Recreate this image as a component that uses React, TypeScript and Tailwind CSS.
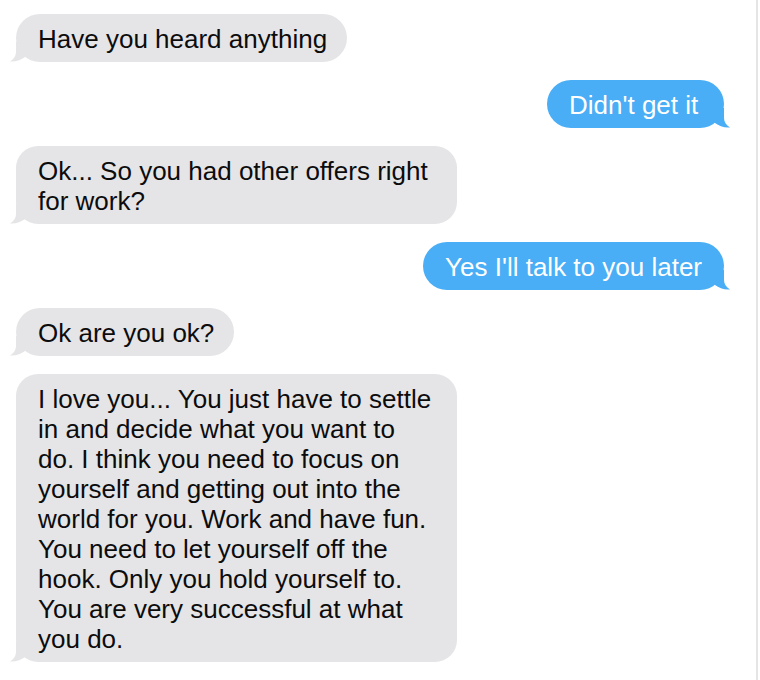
type Message = { id: number; from: "them" | "me"; lines: string[] };

const messages: Message[] = [
  { id: 1, from: "them", lines: ["Have you heard anything"] },
  { id: 2, from: "me", lines: ["Didn't get it"] },
  { id: 3, from: "them", lines: ["Ok... So you had other offers right", "for work?"] },
  { id: 4, from: "me", lines: ["Yes I'll talk to you later"] },
  { id: 5, from: "them", lines: ["Ok are you ok?"] },
  {
    id: 6,
    from: "them",
    lines: [
      "I love you... You just have to settle",
      "in and decide what you want to",
      "do. I think you need to focus on",
      "yourself and getting out into the",
      "world for you. Work and have fun.",
      "You need to let yourself off the",
      "hook. Only you hold yourself to.",
      "You are very successful at what",
      "you do.",
    ],
  },
];

function Tail({ mine }: { mine: boolean }) {
  return (
    <svg
      aria-hidden="true"
      viewBox="0 0 18 20"
      className={
        mine
          ? "absolute -right-1.5 bottom-0 h-5 w-[18px] -scale-x-100 fill-[#49aef5]"
          : "absolute -left-1.5 bottom-0 h-5 w-[18px] fill-[#e5e5e7]"
      }
    >
      <path d="M6 0 V10 C6 14 4 17 0 19.5 C6 20 11 18 15 15 L18 12 V0 Z" />
    </svg>
  );
}

function Bubble({ message }: { message: Message }) {
  const mine = message.from === "me";
  const side = mine
    ? "min-w-[177px] self-end bg-[#49aef5] px-[22px] text-white"
    : "self-start bg-[#e5e5e7] pr-5 pl-[22px] text-[#0c0c0d]";
  const shape = message.lines.length > 1 ? "w-[441px] max-w-full rounded-[22px]" : "rounded-3xl";
  return (
    <li className={`relative pt-2.5 pb-2 ${side} ${shape}`}>
      <Tail mine={mine} />
      <p>
        {message.lines.map((line) => (
          <span key={line} className="block">
            {line}{" "}
          </span>
        ))}
      </p>
    </li>
  );
}

export default function App() {
  return (
    <main className="mr-0.5 min-h-screen border-r-2 border-[#e5e5e5] bg-white font-['Liberation_Sans',Arial,sans-serif] text-[26px] leading-[30px]">
      <ul className="flex flex-col gap-[18px] pt-3.5 pr-8 pb-[18px] pl-4">
        {messages.map((message) => (
          <Bubble key={message.id} message={message} />
        ))}
      </ul>
    </main>
  );
}
